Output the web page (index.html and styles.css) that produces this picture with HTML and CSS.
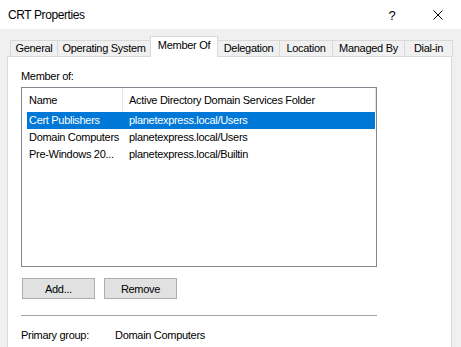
FILE: index.html
```html
<!DOCTYPE html>
<html lang="en">
<head>
    <meta charset="UTF-8">
    <title>CRT Properties</title>
    <link rel="stylesheet" href="styles.css">
</head>
<body>
    <div class="window">
        <div class="titlebar">
            <span class="title">CRT Properties</span>
            <span class="caption-btn help">?</span>
            <span class="caption-btn close">
                <svg width="10" height="10" viewBox="0 0 10 10">
                    <path d="M0.5 0.5 L9.5 9.5 M9.5 0.5 L0.5 9.5" stroke="#000" stroke-width="1" fill="none"/>
                </svg>
            </span>
        </div>

        <div class="tabs">
            <div class="tab tab-general">General</div>
            <div class="tab tab-os">Operating System</div>
            <div class="tab tab-member active">Member Of</div>
            <div class="tab tab-delegation">Delegation</div>
            <div class="tab tab-location">Location</div>
            <div class="tab tab-managed">Managed By</div>
            <div class="tab tab-dialin">Dial-in</div>
        </div>

        <div class="panel">
            <div class="label">Member of:</div>

            <div class="listview">
                <div class="list-header">
                    <div class="col-name">Name</div>
                    <div class="col-folder">Active Directory Domain Services Folder</div>
                </div>
                <div class="list-row selected">
                    <div class="cell-name">Cert Publishers</div>
                    <div class="cell-folder">planetexpress.local/Users</div>
                </div>
                <div class="list-row">
                    <div class="cell-name">Domain Computers</div>
                    <div class="cell-folder">planetexpress.local/Users</div>
                </div>
                <div class="list-row">
                    <div class="cell-name">Pre-Windows 20...</div>
                    <div class="cell-folder">planetexpress.local/Builtin</div>
                </div>
            </div>

            <div class="buttons">
                <button type="button">Add...</button>
                <button type="button">Remove</button>
            </div>

            <div class="separator"></div>

            <div class="primary">
                <span class="primary-label">Primary group:</span>
                <span>Domain Computers</span>
            </div>
        </div>
    </div>
</body>
</html>
```

FILE: styles.css
```css
/* Dialog */
:root {
    --dialog-bg: #f0f0f0;
    --tab-border: #d9d9d9;
    --list-border: #828790;
    --select-color: #0078d7;
    --button-bg: #e1e1e1;
    --button-border: #adadad;
}

body {
    margin: 0;
    font-family: "Liberation Sans", Arial, sans-serif;
    font-size: 11px;
    letter-spacing: -0.3px;
    color: #000;
}

.window {
    width: 461px;
    height: 347px;
    background-color: var(--dialog-bg);
    overflow: hidden;
    display: flex;
    flex-direction: column;
}

/* Title bar */
.titlebar {
    height: 29px;
    flex-shrink: 0;
    background-color: #fff;
    display: flex;
    align-items: center;
}

.title {
    padding-left: 8px;
    font-size: 12px;
    letter-spacing: -0.4px;
    margin-right: auto;
}

.caption-btn {
    width: 46px;
    height: 29px;
    display: flex;
    align-items: center;
    justify-content: center;
}

.help {
    font-size: 13px;
    padding-top: 1px;
    box-sizing: border-box;
}

/* Tabs */
.tabs {
    display: flex;
    align-items: flex-end;
    height: 21px;
    margin-top: 7px;
    padding-left: 10px;
    margin-bottom: -1px;
    flex-shrink: 0;
}

.tab {
    height: 15px;
    margin-bottom: 1px;
    border: 1px solid var(--tab-border);
    border-bottom: none;
    border-right: none;
    text-align: center;
    line-height: 15px;
    box-sizing: content-box;
}

.tab-dialin {
    border-right: 1px solid var(--tab-border);
}

.tab.active {
    height: 20px;
    margin-bottom: 0;
    line-height: 16px;
    background-color: #fff;
    border-right: 1px solid var(--tab-border);
    position: relative;
    z-index: 1;
}

.tab.active + .tab {
    border-left: none;
}

.tab-general { width: 46px; }
.tab-os { width: 92px; }
.tab-member { width: 66px; }
.tab-delegation { width: 61px; }
.tab-location { width: 52px; }
.tab-managed { width: 71px; }
.tab-dialin { width: 47px; }

/* Panel */
.panel {
    margin: 0 9px 0 7px;
    height: 320px;
    flex-shrink: 0;
    background-color: #fff;
    border: 1px solid var(--tab-border);
    padding: 13px 0 0 13px;
}

.label {
    line-height: 13px;
}

.listview {
    margin-top: 4px;
    width: 354px;
    height: 178px;
    border: 1px solid var(--list-border);
}

.list-header {
    display: flex;
    height: 24px;
    line-height: 24px;
}

.col-name {
    width: 93px;
    padding-left: 7px;
    border-right: 1px solid #e5e5e5;
}

.col-folder {
    padding-left: 6px;
    flex: 1;
    border-right: 1px solid #e5e5e5;
}

.list-row {
    display: flex;
    height: 17px;
    line-height: 17px;
    margin: 0 1px 0 5px;
}

.list-row.selected {
    background-color: var(--select-color);
    color: #fff;
}

.cell-name {
    width: 98px;
    padding-left: 2px;
    white-space: nowrap;
}

.cell-folder {
    padding-left: 2px;
    white-space: nowrap;
}

/* Buttons */
.buttons {
    display: flex;
    gap: 9px;
    margin: 11px 0 0 1px;
}

button {
    width: 73px;
    height: 21px;
    padding: 0;
    font-family: inherit;
    font-size: 11px;
    letter-spacing: -0.3px;
    color: #000;
    background-color: var(--button-bg);
    border: 1px solid var(--button-border);
}

.separator {
    width: 356px;
    height: 1px;
    margin-top: 16px;
    background-color: #a0a0a0;
}

.primary {
    display: flex;
    margin-top: 13px;
    line-height: 13px;
}

.primary-label {
    width: 94px;
}
```
